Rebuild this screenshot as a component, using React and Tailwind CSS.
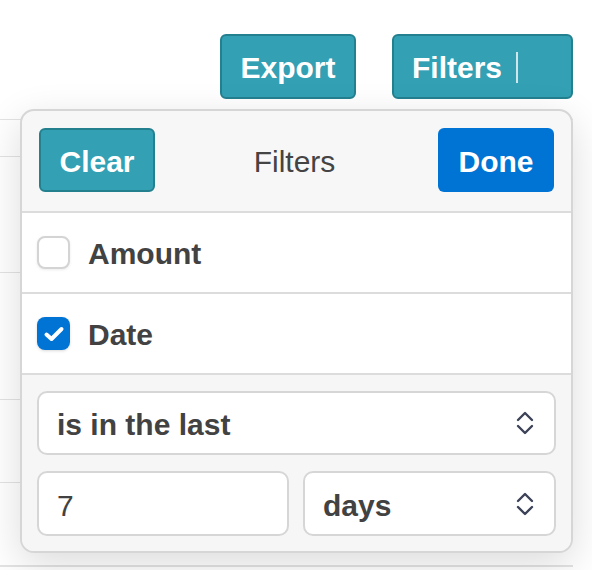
import React from "react";

const font = { fontFamily: '"Liberation Sans", Arial, sans-serif' };

function Chevrons() {
  return (
    <svg width="18" height="26" viewBox="0 0 18 26" fill="none" stroke="#3c4257" strokeWidth="2.4" strokeLinecap="round" strokeLinejoin="round">
      <path d="M2 10 L9 3 L16 10" />
      <path d="M2 16 L9 23 L16 16" />
    </svg>
  );
}

export default function App() {
  return (
    <div className="relative w-[592px] h-[570px] bg-white overflow-hidden text-[#424242]" style={font}>
      <div className="flex justify-end gap-[36px] pt-[34px] pr-[19px]">
        <button className="h-[65px] w-[136px] rounded-[6px] bg-[#33a0b4] border-2 border-[#23808f] text-white font-bold text-[30px] flex items-center justify-center pt-[2px]">
          Export
        </button>
        <button className="h-[65px] w-[181px] rounded-[6px] bg-[#33a0b4] border-2 border-[#23808f] text-white font-bold text-[30px] flex items-center pl-[18px] pt-[2px]">
          <span>Filters</span>
          <span className="ml-[14px] w-[2px] h-[31px] bg-[#cfe7eb]" />
        </button>
      </div>

      {/* background table lines */}
      <div className="mt-[20px] w-[573px] flex flex-col">
        <div className="h-[1px] bg-[#e3e3e3]" />
        <div className="h-[36px]" />
        <div className="h-[1px] bg-[#e3e3e3]" />
        <div className="h-[115px]" />
        <div className="h-[1px] bg-[#e3e3e3]" />
        <div className="h-[126px]" />
        <div className="h-[1px] bg-[#e3e3e3]" />
        <div className="h-[82px]" />
        <div className="h-[1px] bg-[#e3e3e3]" />
        <div className="h-[82px]" />
        <div className="h-[2px] bg-[#e3e3e3]" />
      </div>

      {/* popover */}
      <div className="absolute left-[20px] top-[109px] w-[553px] h-[444px] rounded-[14px] border-2 border-[#d6d6d6] bg-[#f7f7f7] shadow-[0_12px_40px_rgba(0,0,0,0.14)] overflow-hidden flex flex-col">
        <div className="h-[102px] flex items-center justify-between px-[17px] pb-[2px] border-b-2 border-[#dcdcdc]">
          <button className="h-[64px] w-[116px] rounded-[6px] bg-[#33a0b4] border-2 border-[#23808f] text-white font-bold text-[30px] flex items-center justify-center pt-[2px]">
            Clear
          </button>
          <span className="text-[30px] text-[#444] pr-[4px] pt-[2px]">Filters</span>
          <button className="h-[64px] w-[116px] rounded-[6px] bg-[#0074d4] text-white font-bold text-[30px] flex items-center justify-center pt-[2px]">
            Done
          </button>
        </div>
        <div className="h-[81px] bg-white flex items-center pl-[15px] border-b-2 border-[#dcdcdc]">
          <span className="w-[33px] h-[33px] rounded-[8px] border-2 border-[#d4d4d4] bg-white shadow-[0_1px_3px_rgba(0,0,0,0.08)]" />
          <span className="ml-[18px] font-bold text-[30px] text-[#424242] pt-[2px]">Amount</span>
        </div>
        <div className="h-[81px] bg-white flex items-center pl-[15px] border-b-2 border-[#dcdcdc]">
          <span className="w-[33px] h-[33px] rounded-[8px] bg-[#0074d4] flex items-center justify-center shadow-[0_1px_3px_rgba(0,0,0,0.15)]">
            <svg width="22" height="18" viewBox="0 0 22 18" fill="none" stroke="white" strokeWidth="4" strokeLinecap="round" strokeLinejoin="round">
              <path d="M3.5 9.5 L8.5 14 L18.5 4" />
            </svg>
          </span>
          <span className="ml-[18px] font-bold text-[30px] text-[#424242] pt-[2px]">Date</span>
        </div>
        <div className="flex-1 bg-[#f6f6f6] px-[15px] pt-[16px] flex flex-col gap-[16px]">
          <div className="h-[64px] rounded-[10px] border-2 border-[#d6d6d6] bg-white flex items-center justify-between pl-[18px] pr-[20px]">
            <span className="font-bold text-[30px] text-[#424242] pt-[3px]">is in the last</span>
            <Chevrons />
          </div>
          <div className="flex gap-[14px]">
            <div className="h-[65px] w-[252px] rounded-[10px] border-2 border-[#d6d6d6] bg-white flex items-center pl-[18px]">
              <span className="text-[30px] text-[#424242] pt-[3px]">7</span>
            </div>
            <div className="h-[65px] flex-1 rounded-[10px] border-2 border-[#d6d6d6] bg-white flex items-center justify-between pl-[18px] pr-[20px]">
              <span className="font-bold text-[30px] text-[#424242] pt-[3px]">days</span>
              <Chevrons />
            </div>
          </div>
        </div>
      </div>
    </div>
  );
}
